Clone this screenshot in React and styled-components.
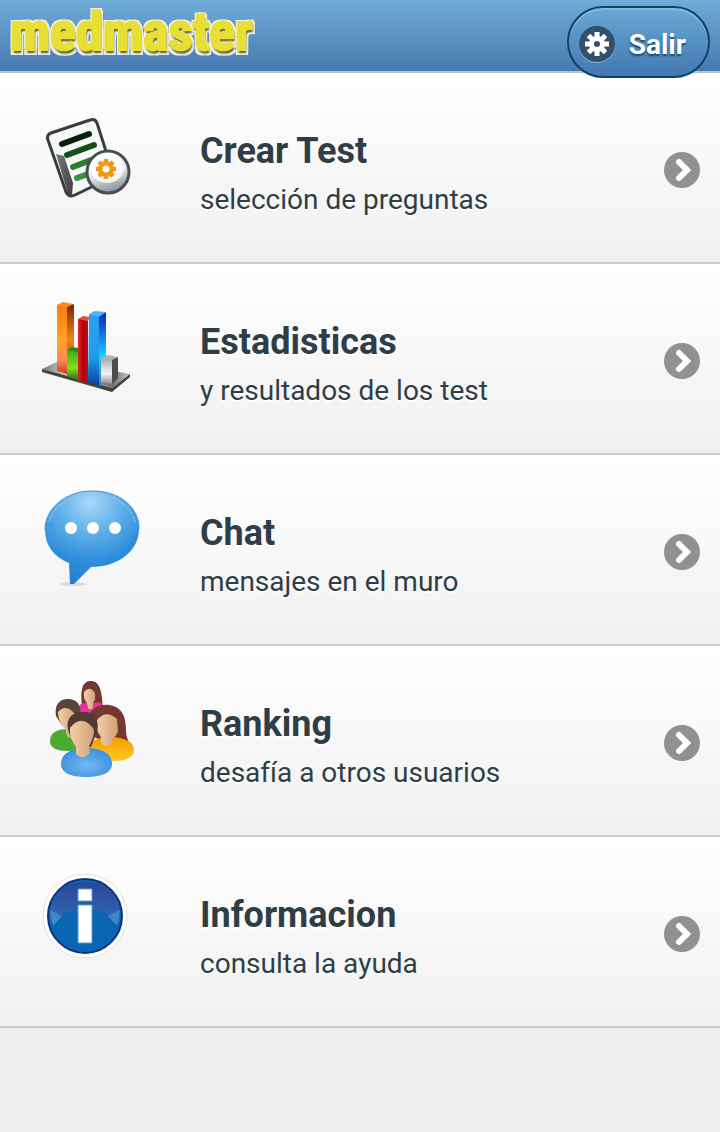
import React from 'react';
import styled, { createGlobalStyle } from 'styled-components';

const colors = {
  page: '#eeeeee',
  text: '#2f3e46',
  border: '#cccccc',
  arrow: '#919191',
  buttonBorder: '#0b4467',
};

const NotesIcon = () => (
  <Icon viewBox="0 -8 120 120" aria-hidden="true">
    <defs>
      <linearGradient id="disc" x1="0" y1="0" x2="0.3" y2="1">
        <stop offset="0" stopColor="#ffffff" />
        <stop offset="0.6" stopColor="#e6e9ea" />
        <stop offset="1" stopColor="#929ba2" />
      </linearGradient>
      <linearGradient id="fold" x1="0" y1="0" x2="1" y2="1">
        <stop offset="0" stopColor="#77797b" />
        <stop offset="1" stopColor="#3b3d40" />
      </linearGradient>
    </defs>
    <path
      d="M21 28 L60 15 Q65 13 67 18 L82 65 Q83 71 78 74 L45 90 Q39 93 36 87 L18 35 Q16 30 21 28Z"
      fill="#f6f7f7"
      stroke="#3a3c3f"
      strokeWidth="3"
    />
    <path d="M26 49 L34 51 L43 78 L42 90 L38 89Z" fill="url(#fold)" />
    <g strokeWidth="6" strokeLinecap="round">
      <path d="M32 39 L59 29" stroke="#07200c" />
      <path d="M37 50 L64 40" stroke="#15501a" />
      <path d="M43 62 L61 55" stroke="#2b7f2c" />
      <path d="M47 73 L58 69" stroke="#36913a" />
    </g>
    <circle cx="78" cy="67" r="21" fill="url(#disc)" stroke="#494d52" strokeWidth="3" />
    <ellipse cx="77" cy="63" rx="17" ry="15" fill="#ffffff" fillOpacity="0.8" />
    <g transform="translate(76 64)" fill="#f4980f">
      {[0, 45, 90, 135, 180, 225, 270, 315].map(angle => (
        <path key={angle} d="M-3 -5 L-2 -10 L2 -10 L3 -5Z" transform={`rotate(${angle})`} />
      ))}
      <circle r="7" />
      <circle r="3.5" fill="#fffaf0" />
    </g>
  </Icon>
);

const StatsIcon = () => (
  <Icon viewBox="0 -2 120 120" aria-hidden="true">
    <defs>
      <linearGradient id="orange" x1="0" y1="0" x2="0" y2="1">
        <stop offset="0" stopColor="#ff7a0a" />
        <stop offset="0.5" stopColor="#ffa22c" />
        <stop offset="0.8" stopColor="#fd8a55" />
        <stop offset="1" stopColor="#d23a1a" />
      </linearGradient>
      <linearGradient id="orangeSide" x1="0" y1="0" x2="0" y2="1">
        <stop offset="0" stopColor="#7a2400" />
        <stop offset="0.5" stopColor="#f58514" />
        <stop offset="1" stopColor="#8d2a08" />
      </linearGradient>
      <linearGradient id="blue" x1="0" y1="0" x2="0" y2="1">
        <stop offset="0" stopColor="#2f9df0" />
        <stop offset="0.6" stopColor="#1f9fe8" />
        <stop offset="1" stopColor="#0b3f9e" />
      </linearGradient>
      <linearGradient id="blueSide" x1="0" y1="0" x2="0" y2="1">
        <stop offset="0" stopColor="#0722c4" />
        <stop offset="0.6" stopColor="#18d0ff" />
        <stop offset="1" stopColor="#3d72cf" />
      </linearGradient>
      <linearGradient id="red" x1="0" y1="0" x2="1" y2="0">
        <stop offset="0" stopColor="#e3262a" />
        <stop offset="0.5" stopColor="#b30008" />
        <stop offset="1" stopColor="#b5131a" />
      </linearGradient>
      <linearGradient id="green" x1="0" y1="0" x2="0" y2="1">
        <stop offset="0" stopColor="#3bad16" />
        <stop offset="0.6" stopColor="#84de1c" />
        <stop offset="1" stopColor="#287810" />
      </linearGradient>
      <linearGradient id="silver" x1="0" y1="0" x2="0" y2="1">
        <stop offset="0" stopColor="#a8a8a8" />
        <stop offset="0.6" stopColor="#f4f4f4" />
        <stop offset="1" stopColor="#8d8d8d" />
      </linearGradient>
      <linearGradient id="plate" x1="0" y1="0" x2="1" y2="0">
        <stop offset="0" stopColor="#777777" />
        <stop offset="0.3" stopColor="#d5d5d5" />
        <stop offset="0.8" stopColor="#707070" />
        <stop offset="1" stopColor="#c8c8c8" />
      </linearGradient>
    </defs>
    <path d="M12 79 L29 71 L100 84 L82 98Z" fill="url(#plate)" />
    <path d="M12 79 L82 98 L100 84 L100 87 L82 102 L12 82Z" fill="#424242" />
    <path d="M27 15 L37 16 L37 84 L27 81Z" fill="url(#orange)" />
    <path d="M37 16 L44 14 L44 78 L37 84Z" fill="url(#orangeSide)" />
    <path d="M27 15 L33 12 L44 14 L37 17Z" fill="#ff8b22" />
    <path d="M37 60 L48 60 L48 90 L37 86Z" fill="url(#green)" />
    <path d="M37 60 L42 57 L49 58 L48 62Z" fill="#218e12" />
    <path d="M48 29 L58 29 L58 93 L48 90Z" fill="url(#red)" />
    <path d="M48 29 L53 26 L60 27 L58 31Z" fill="#e75148" />
    <path d="M59 24 L69 26 L69 96 L58 92Z" fill="url(#blue)" />
    <path d="M69 26 L76 22 L76 68 L71 70 L71 95 L69 96Z" fill="url(#blueSide)" />
    <path d="M59 24 L65 21 L76 22 L69 27Z" fill="#47b4ff" />
    <path d="M71 68 L82 69 L82 94 L71 92Z" fill="url(#silver)" />
    <path d="M82 69 L88 67 L88 88 L82 94Z" fill="#4d4d4d" />
    <path d="M71 68 L78 65 L88 67 L82 70Z" fill="#b2b2b2" />
  </Icon>
);

const ChatIcon = () => (
  <Icon viewBox="0 -1 120 120" aria-hidden="true">
    <defs>
      <radialGradient id="bubble" cx="0.48" cy="0.12" r="0.85">
        <stop offset="0" stopColor="#a9d8f8" />
        <stop offset="0.4" stopColor="#5fb0e9" />
        <stop offset="0.75" stopColor="#2e8ddb" />
        <stop offset="1" stopColor="#2680d0" />
      </radialGradient>
    </defs>
    <ellipse cx="43" cy="104" rx="13" ry="2" fill="#dadada" />
    <path
      d="M62 11 C90 11 109 27 109 49 C109 71 88 87 61 87 L44 104 L40 104 L39 83 C24 77 15 65 15 50 C15 28 36 11 62 11Z"
      fill="url(#bubble)"
    />
    <path
      d="M19 42 C24 24 42 14 62 14 C83 14 101 25 105 42"
      fill="none"
      stroke="#8cc6ef"
      strokeWidth="1"
    />
    <path
      d="M15 50 C15 28 36 11 62 11 C90 11 109 27 109 49"
      fill="none"
      stroke="#3c93d2"
      strokeWidth="1"
    />
    <g fill="#ffffff">
      <circle cx="41" cy="48" r="6" />
      <circle cx="63" cy="48" r="6" />
      <circle cx="85" cy="48" r="6" />
    </g>
  </Icon>
);

const PeopleIcon = () => (
  <Icon viewBox="0 0 120 120" aria-hidden="true">
    <defs>
      <linearGradient id="skin" x1="0" y1="0" x2="1" y2="0">
        <stop offset="0" stopColor="#f2d0aa" />
        <stop offset="1" stopColor="#d3a076" />
      </linearGradient>
      <radialGradient id="shirt" cx="0.5" cy="0.6" r="0.6">
        <stop offset="0" stopColor="#70b9f2" />
        <stop offset="1" stopColor="#3d8ddc" />
      </radialGradient>
      <linearGradient id="yellow" x1="0" y1="0" x2="0" y2="1">
        <stop offset="0" stopColor="#f59a00" />
        <stop offset="1" stopColor="#ffca22" />
      </linearGradient>
    </defs>
    <path d="M52 36 C50 18 53 11 61 11 C70 11 72 22 73 38 L67 42 L52 38Z" fill="#733830" />
    <path d="M49 36 C52 32 57 33 61 34 C68 31 74 33 74 38 L70 53 L51 48Z" fill="#e9319b" />
    <path d="M54 22 Q60 15 65 23 Q66 30 63 33 L63 38 Q60 41 58 38 L57 33 Q53 29 54 22Z" fill="url(#skin)" />
    <path d="M20 71 C20 62 28 59 38 59 C48 59 56 62 56 71 C56 78 48 81 38 81 C27 81 20 78 20 71Z" fill="#4aab32" />
    <path d="M26 46 C24 33 31 29 38 29 C47 29 52 35 50 47 L43 62 L31 54Z" fill="#59443b" />
    <path d="M28 42 Q36 33 45 44 L46 58 L43 67 Q36 70 36 60 Q28 53 28 42Z" fill="url(#skin)" />
    <path
      d="M57 48 C61 38 70 34 79 35 C94 37 96 50 96 60 C96 68 99 70 99 75 L81 77 L63 66Z"
      fill="#75382f"
    />
    <path d="M58 80 C58 71 68 67 80 67 C94 67 104 72 104 80 C104 88 95 91 83 91 C68 91 58 88 58 80Z" fill="url(#yellow)" />
    <path
      d="M67 50 Q76 39 87 49 L88 61 Q86 67 82 69 L82 73 Q76 79 71 73 L71 67 Q65 60 67 50Z"
      fill="url(#skin)"
    />
    <path
      d="M31 94 C31 83 42 78 56 78 C71 78 82 83 82 94 C82 103 71 107 56 107 C41 107 31 103 31 94Z"
      fill="url(#shirt)"
    />
    <path
      d="M39 63 C34 49 42 42 53 42 C64 42 70 50 67 62 L61 77 L44 72Z"
      fill="#513a31"
    />
    <path
      d="M40 58 Q51 44 62 57 Q66 60 62 70 L59 76 L60 83 Q52 91 46 84 L46 77 Q39 68 40 58Z"
      fill="url(#skin)"
    />
  </Icon>
);

const InfoIcon = () => (
  <Icon viewBox="0 -4 120 120" aria-hidden="true">
    <defs>
      <linearGradient id="gloss" x1="0" y1="0" x2="0" y2="1">
        <stop offset="0" stopColor="#2a4699" />
        <stop offset="1" stopColor="#326bb5" />
      </linearGradient>
    </defs>
    <circle cx="55" cy="51" r="42" fill="#ffffff" stroke="#e2e2e2" strokeWidth="1" />
    <circle cx="55" cy="51" r="37" fill="#0866b2" stroke="#12317b" strokeWidth="2" />
    <path d="M20 58 C18 31 33 17 55 17 C77 17 92 31 90 58 Q74 44 55 44 Q36 44 20 58Z" fill="url(#gloss)" />
    <path d="M20 45 L32 51 L23 61Z M90 45 L78 51 L87 61Z" fill="#4186c6" />
    <path d="M48 24 H62 V36 H48Z M48 40 H62 V78 H48Z" fill="#ffffff" stroke="#5b9ad6" strokeWidth="1" />
  </Icon>
);

const GearIcon = () => (
  <Gear viewBox="0 0 36 36" aria-hidden="true">
    <circle cx="18" cy="19" r="18" fill="#83b5d9" />
    <circle cx="18" cy="18" r="18" fill="#31506b" />
    <g transform="translate(18 18)" fill="#ffffff">
      {[0, 45, 90, 135, 180, 225, 270, 315].map(angle => (
        <rect key={angle} x="-2.5" y="-12" width="5" height="6" transform={`rotate(${angle})`} />
      ))}
      <circle r="8" />
      <circle r="3" fill="#31506b" />
    </g>
  </Gear>
);

const menu = [
  { title: 'Crear Test', detail: 'selección de preguntas', Picture: NotesIcon },
  { title: 'Estadisticas', detail: 'y resultados de los test', Picture: StatsIcon },
  { title: 'Chat', detail: 'mensajes en el muro', Picture: ChatIcon },
  { title: 'Ranking', detail: 'desafía a otros usuarios', Picture: PeopleIcon },
  { title: 'Informacion', detail: 'consulta la ayuda', Picture: InfoIcon },
];

const MenuItem = ({ title, detail, Picture }) => (
  <Item>
    <ItemLink href="#">
      <Picture />
      <ItemText>
        <h2>{title}</h2>
        <p>{detail}</p>
      </ItemText>
      <Arrow viewBox="0 0 36 36" aria-hidden="true">
        <circle cx="18" cy="18" r="18" fill={colors.arrow} />
        <path
          d="M15 10 L23 18 L15 26"
          fill="none"
          stroke="#ffffff"
          strokeWidth="6"
          strokeLinecap="round"
        />
      </Arrow>
    </ItemLink>
  </Item>
);

const App = () => (
  <>
    <GlobalStyle />
    <Header>
      <Logo>medmaster</Logo>
      <ExitButton type="button">
        <GearIcon />
        Salir
      </ExitButton>
    </Header>
    <main>
      <Menu>
        {menu.map(item => (
          <MenuItem key={item.title} {...item} />
        ))}
      </Menu>
    </main>
  </>
);

export default App;

const GlobalStyle = createGlobalStyle`
  * {
    box-sizing: border-box;
  }

  body {
    margin: 0;
    background: ${colors.page};
    color: ${colors.text};
    font-family: Roboto, sans-serif;
  }
`;

const Header = styled.header`
  display: flex;
  align-items: flex-start;
  justify-content: space-between;
  height: 73px;
  padding: 0 10px;
  border-bottom: 2px solid #b9c3cc;
  background: linear-gradient(#6facd9, #4779b0);
`;

const Logo = styled.h1`
  margin: 0;
  color: #e8df35;
  font-family: 'Liberation Sans Narrow', 'Roboto Condensed', 'Liberation Sans', sans-serif;
  font-size: 54px;
  font-weight: bold;
  line-height: 64px;
  -webkit-text-stroke: 2px #e8df35;
  text-shadow: 1px 3px 2px #5b5526, -2px -2px 0 #f2f2ee, 2px -2px 0 #f2f2ee, 3px 5px 0 #f2f2ee,
    -2px 5px 0 #f2f2ee, 3px 0 0 #f2f2ee;
`;

const ExitButton = styled.button`
  position: relative;
  display: flex;
  align-items: center;
  gap: 14px;
  height: 72px;
  margin-top: 6px;
  padding: 4px 22px 0 10px;
  border: 2px solid ${colors.buttonBorder};
  border-radius: 36px;
  background: linear-gradient(#69a8d6, #4379b1);
  box-shadow: inset 0 2px 1px #86bce2;
  color: #ffffff;
  font: bold 28px Roboto, sans-serif;
  text-shadow: 0 2px 2px #1d4568;
  cursor: pointer;
`;

const Gear = styled.svg`
  width: 36px;
  height: 36px;
  overflow: visible;
`;

const Menu = styled.ul`
  margin: 0;
  padding: 0;
  list-style: none;
`;

const Item = styled.li`
  border-bottom: 2px solid ${colors.border};
  background: linear-gradient(#ffffff, #f0f0f0);
`;

const ItemLink = styled.a`
  display: flex;
  align-items: center;
  min-height: 189px;
  padding: 24px 20px 20px 30px;
  color: inherit;
  text-decoration: none;
`;

const Icon = styled.svg`
  flex: none;
  align-self: flex-start;
  width: 120px;
  height: 120px;
`;

const ItemText = styled.div`
  flex: 1;
  min-width: 0;
  padding: 12px 20px 0 50px;
  text-shadow: 0 2px 0 #ffffff;

  h2,
  p {
    margin: 0;
  }

  h2 {
    font-size: 36px;
    line-height: 48px;
  }

  p {
    font-size: 28px;
    line-height: 50px;
  }
`;

const Arrow = styled.svg`
  flex: none;
  width: 36px;
  height: 36px;
`;
